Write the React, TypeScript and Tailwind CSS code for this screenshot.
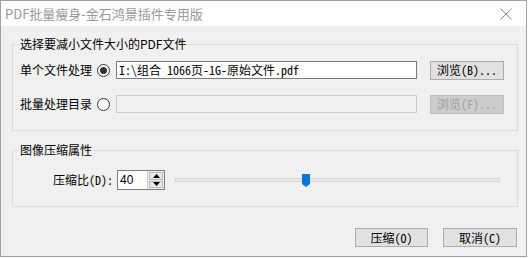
import React from "react";

const cjk = { fontFamily: '"Noto Sans CJK SC", "Noto Sans", sans-serif' };
const mono = { fontFamily: '"Noto Sans Mono CJK SC", "Noto Sans CJK SC", "Liberation Mono", monospace' };

function Radio({ checked }: { checked?: boolean }) {
  return (
    <div className="w-[13px] h-[13px] rounded-full border border-[#333333] bg-white flex items-center justify-center shrink-0">
      {checked && <div className="w-[7px] h-[7px] rounded-full bg-[#333333]" />}
    </div>
  );
}

function Btn({ children, disabled, w = 74 }: { children: React.ReactNode; disabled?: boolean; w?: number }) {
  return (
    <div
      className={
        "h-[19px] flex items-center justify-center text-[12px] leading-none border " +
        (disabled ? "bg-[#cccccc] border-[#bfbfbf] text-[#a0a0a0]" : "bg-[#e1e1e1] border-[#adadad] text-black")
      }
      style={{ width: w, ...mono }}
    >
      {children}
    </div>
  );
}

export default function App() {
  return (
    <div className="w-[529px] h-[258px] bg-white" style={cjk}>
      <div className="w-[527px] h-[257px] border border-[#a0a0a0] flex flex-col">
        <div className="h-[25px] bg-white flex items-center justify-between pl-[4px] pr-[14px] shrink-0">
          <span className="text-[13px] text-[#999999] leading-none">PDF批量瘦身-金石鸿景插件专用版</span>
          <svg width="12" height="12" viewBox="0 0 12 12">
            <path d="M0.5 0.5 L11.5 11.5 M11.5 0.5 L0.5 11.5" stroke="#8a8a8a" strokeWidth="1" />
          </svg>
        </div>
        <div className="flex-1 bg-[#f0f0f0] pl-[11px] pt-[18px] text-[12px] text-black">
          {/* Group 1 */}
          <div className="relative w-[506px] h-[87px] border border-[#dcdcdc] pt-[16px] pl-[7px]">
            <span className="absolute left-[6px] top-[-9px] bg-[#f0f0f0] px-[1px] leading-[16px]">选择要减小文件大小的PDF文件</span>
            <div className="flex items-center h-[18px]">
              <span className="w-[77px] leading-none">单个文件处理</span>
              <Radio checked />
              <div className="ml-[6px] w-[301px] h-[18px] border border-[#7a7a7a] bg-white flex items-center pl-[2px] leading-none" style={mono}>
                I:\组合 1066页-1G-原始文件.pdf
              </div>
              <div className="ml-[13px]"><Btn>浏览(B)...</Btn></div>
            </div>
            <div className="flex items-center h-[18px] mt-[16px]">
              <span className="w-[77px] leading-none">批量处理目录</span>
              <Radio />
              <div className="ml-[6px] w-[301px] h-[18px] border border-[#cccccc] bg-[#f0f0f0]" />
              <div className="ml-[13px]"><Btn disabled>浏览(F)...</Btn></div>
            </div>
          </div>
          {/* Group 2 */}
          <div className="relative w-[506px] h-[57px] border border-[#dcdcdc] mt-[19px] pt-[19px] pl-[40px]">
            <span className="absolute left-[6px] top-[-9px] bg-[#f0f0f0] px-[1px] leading-[16px]">图像压缩属性</span>
            <div className="flex items-center h-[20px]">
              <span className="w-[64px] leading-none" style={mono}>压缩比(D):</span>
              <div className="w-[48px] h-[20px] border border-[#7a7a7a] bg-white flex">
                <div className="flex-1 flex items-center pl-[2px] leading-none" style={{ fontFamily: '"Liberation Sans", sans-serif' }}>40</div>
                <div className="w-[17px] flex flex-col border-l border-[#cfcfcf] bg-[#f0f0f0] p-[1px] gap-[1px]">
                  <div className="flex-1 bg-[#e8e8e8] border border-[#b8b8b8] flex items-center justify-center">
                    <svg width="7" height="4" viewBox="0 0 7 4"><path d="M3.5 0 L7 4 L0 4 Z" fill="#000" /></svg>
                  </div>
                  <div className="flex-1 bg-[#e8e8e8] border border-[#b8b8b8] flex items-center justify-center">
                    <svg width="7" height="4" viewBox="0 0 7 4"><path d="M0 0 L7 0 L3.5 4 Z" fill="#000" /></svg>
                  </div>
                </div>
              </div>
              <div className="relative ml-[10px] w-[325px] h-[4px] bg-[#e7eaea] border border-[#d6d6d6]">
                <div className="absolute left-[126px] top-[-5px]">
                  <svg width="8" height="13" viewBox="0 0 8 13">
                    <path d="M0 0 H8 V10 L4 13 L0 10 Z" fill="#0078d7" />
                  </svg>
                </div>
              </div>
            </div>
          </div>
          {/* Buttons */}
          <div className="flex w-[506px] justify-end gap-[15px] mt-[21px] pr-[1px]">
            <Btn w={73}>压缩(O)</Btn>
            <Btn w={74}>取消(C)</Btn>
          </div>
        </div>
      </div>
    </div>
  );
}
